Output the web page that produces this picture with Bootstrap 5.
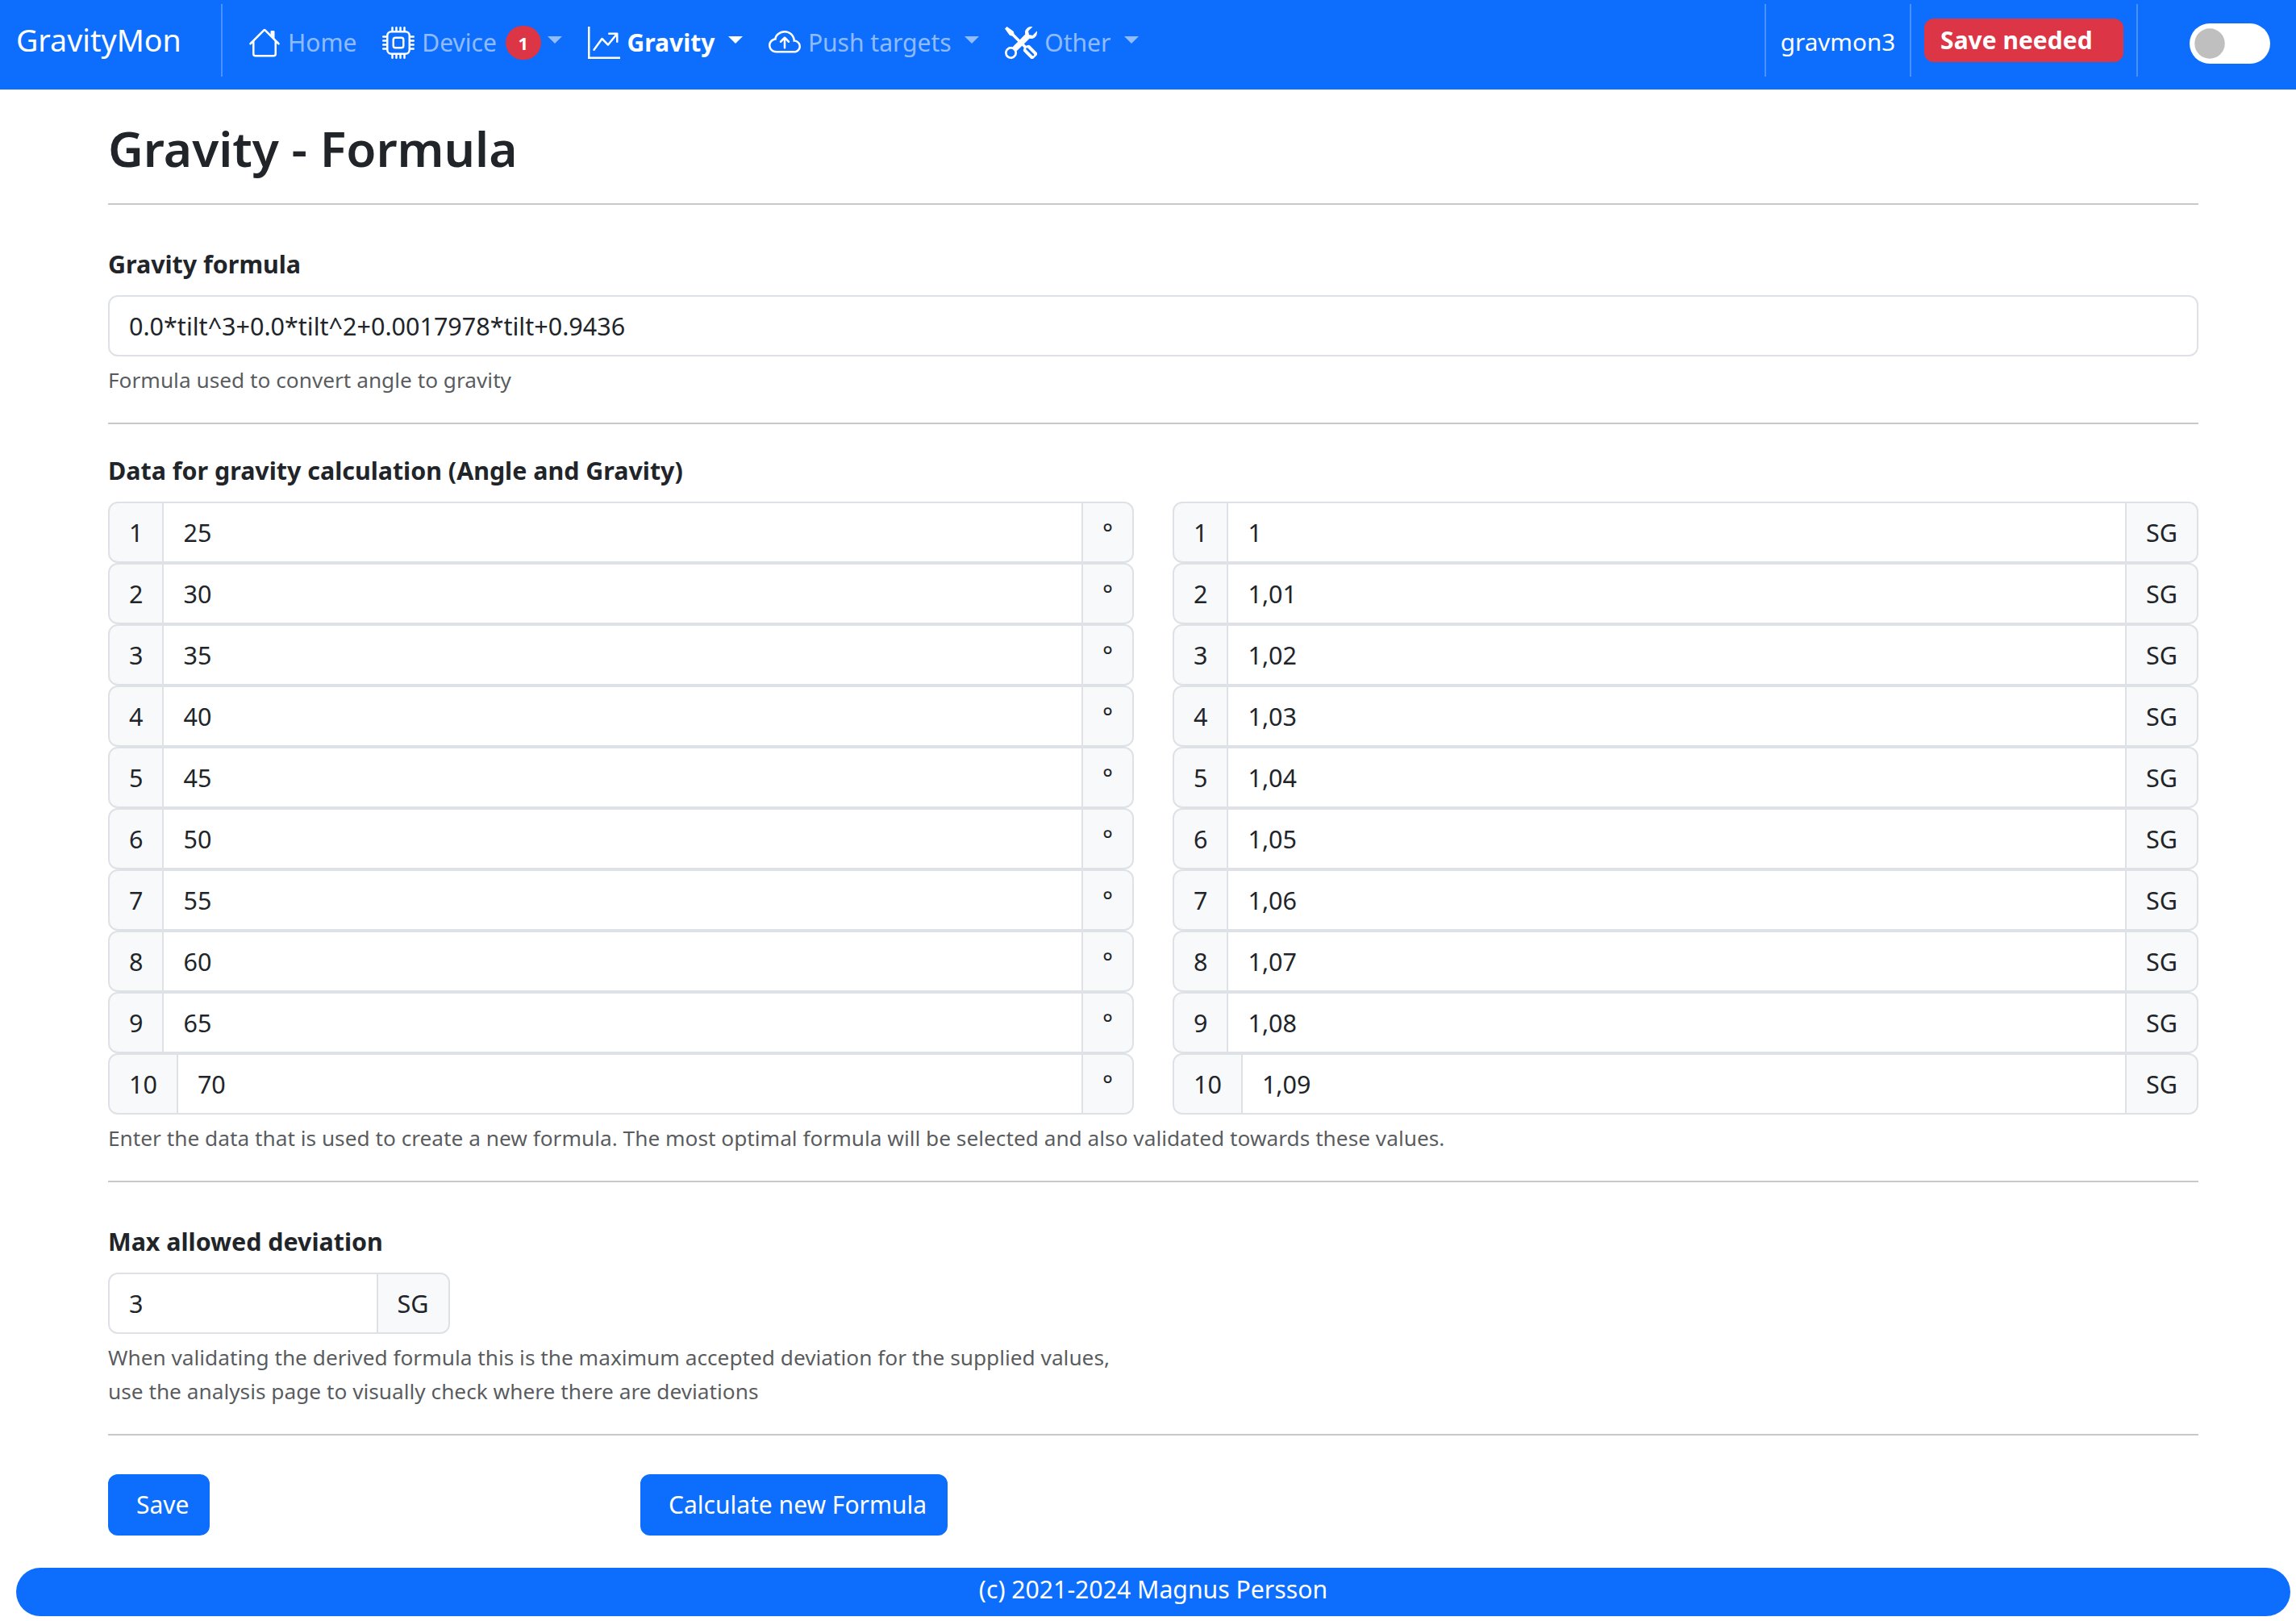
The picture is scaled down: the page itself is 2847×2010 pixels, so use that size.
<!doctype html>
<html lang="en">
<head>
<meta charset="utf-8">
<title>GravityMon</title>
<link href="https://cdn.jsdelivr.net/npm/bootstrap@5.3.0/dist/css/bootstrap.min.css" rel="stylesheet">
<style>
html{zoom:2;overflow-x:hidden}
body{width:1430px;font-family:"Noto Sans","Open Sans",sans-serif;font-size:15px;line-height:24px;color:#212529}
.form-control,.input-group-text{font-size:15.25px;line-height:24px}
.btn,.nav-link{font-size:15px;line-height:24px}
.gm-nav{height:55.5px;padding:0 0 5.5px 0;align-items:stretch}
.gm-nav .navbar-brand{font-size:18.8px;margin:0 0 0 10px;padding:0;display:flex;align-items:center;width:127px}
.gm-nav .vr{align-self:center;height:45px;color:#fff;opacity:.25}
.gm-nav .navbar-nav{align-items:center;margin-left:8px;gap:0}
.gm-nav .nav-link{padding:10px 8px 7px;white-space:nowrap;display:flex;align-items:center;gap:4.5px}
.gm-nav .nav-link.active{font-weight:700}
.gm-nav .dropdown-toggle::after{margin-bottom:4px}
.gm-nav svg{width:20px;height:20px;flex:none;color:#fff}
.gm-badge{font-size:11px;width:22px;height:21px;padding:0;margin:0 -4.5px 0 1px;display:inline-flex;align-items:center;justify-content:center}
.gm-host{color:#fff;font-size:14.8px;padding:2px 9px 0;align-self:center}
.gm-save{font-weight:700;height:27px;padding:0 19.2px 0 10px;margin:0 8px;align-self:center;display:flex;align-items:center;border:0}
.gm-switch{margin:4px 22.5px 0 32px;min-height:0;padding:0;align-self:center;display:flex}
.gm-switch .form-check-input{width:50px;height:25px;margin:0;border:0;background-color:#fff;float:none}
h1.gm-title{font-size:30.2px;font-weight:600;line-height:1.2;margin:18.5px 0 15.7px}
.gm-label{font-weight:700;font-size:15.2px;padding-top:1px;margin-bottom:7px;display:block}
.gm-help{color:rgba(33,37,41,.75);font-size:13.13px;line-height:21px;margin-top:4px}
.gm-small-group{width:33.3%}
.gm-action{padding-left:16.5px;padding-right:12px}
.gm-foot{margin:20px 10px 0;height:30px;line-height:27px;font-size:15.1px;text-align:center}
.gm-title-rule{margin:0 0 24.1px}
</style>
</head>
<body>
<nav class="navbar navbar-expand-lg navbar-dark bg-primary gm-nav flex-nowrap">
  <a class="navbar-brand" href="#">GravityMon</a>
  <div class="vr"></div>
  <ul class="navbar-nav flex-row">
    <li class="nav-item"><a class="nav-link" href="#"><svg viewBox="0 0 16 16" fill="currentColor"><path fill-rule="evenodd" d="M2 13.5V7h1v6.5a.5.5 0 0 0 .5.5h9a.5.5 0 0 0 .5-.5V7h1v6.5a1.5 1.5 0 0 1-1.5 1.5h-9A1.5 1.5 0 0 1 2 13.5zm11-11V6l-2-2V2.5a.5.5 0 0 1 .5-.5h1a.5.5 0 0 1 .5.5z"/><path fill-rule="evenodd" d="M7.293 1.5a1 1 0 0 1 1.414 0l6.647 6.646a.5.5 0 0 1-.708.708L8 2.207 1.354 8.854a.5.5 0 1 1-.708-.708L7.293 1.5z"/></svg>Home</a></li>
    <li class="nav-item dropdown"><a class="nav-link dropdown-toggle" href="#"><svg viewBox="0 0 16 16" fill="currentColor"><path d="M5 0a.5.5 0 0 1 .5.5V2h1V.5a.5.5 0 0 1 1 0V2h1V.5a.5.5 0 0 1 1 0V2h1V.5a.5.5 0 0 1 1 0V2A2.5 2.5 0 0 1 14 4.5h1.5a.5.5 0 0 1 0 1H14v1h1.5a.5.5 0 0 1 0 1H14v1h1.5a.5.5 0 0 1 0 1H14v1h1.5a.5.5 0 0 1 0 1H14a2.5 2.5 0 0 1-2.5 2.5v1.5a.5.5 0 0 1-1 0V14h-1v1.5a.5.5 0 0 1-1 0V14h-1v1.5a.5.5 0 0 1-1 0V14h-1v1.5a.5.5 0 0 1-1 0V14A2.5 2.5 0 0 1 2 11.5H.5a.5.5 0 0 1 0-1H2v-1H.5a.5.5 0 0 1 0-1H2v-1H.5a.5.5 0 0 1 0-1H2v-1H.5a.5.5 0 0 1 0-1H2A2.5 2.5 0 0 1 4.5 2V.5A.5.5 0 0 1 5 0zm-.5 3A1.5 1.5 0 0 0 3 4.5v7A1.5 1.5 0 0 0 4.5 13h7a1.5 1.5 0 0 0 1.5-1.5v-7A1.5 1.5 0 0 0 11.5 3h-7zM5 6.5A1.5 1.5 0 0 1 6.5 5h3A1.5 1.5 0 0 1 11 6.5v3A1.5 1.5 0 0 1 9.5 11h-3A1.5 1.5 0 0 1 5 9.5v-3zM6.5 6a.5.5 0 0 0-.5.5v3a.5.5 0 0 0 .5.5h3a.5.5 0 0 0 .5-.5v-3a.5.5 0 0 0-.5-.5h-3z"/></svg>Device <span class="badge rounded-pill text-bg-danger gm-badge">1</span></a></li>
    <li class="nav-item dropdown"><a class="nav-link dropdown-toggle active" href="#"><svg viewBox="0 0 16 16" fill="currentColor"><path fill-rule="evenodd" d="M0 0h1v15h15v1H0V0Zm10 3.5a.5.5 0 0 1 .5-.5h4a.5.5 0 0 1 .5.5v4a.5.5 0 0 1-1 0V4.9l-3.613 4.417a.5.5 0 0 1-.74.037L7.06 6.767l-3.656 5.027a.5.5 0 0 1-.808-.588l4-5.5a.5.5 0 0 1 .758-.06l2.609 2.61L13.445 4H10.5a.5.5 0 0 1-.5-.5Z"/></svg>Gravity</a></li>
    <li class="nav-item dropdown"><a class="nav-link dropdown-toggle" href="#"><svg viewBox="0 0 16 16" fill="currentColor"><path fill-rule="evenodd" d="M7.646 5.146a.5.5 0 0 1 .708 0l2 2a.5.5 0 0 1-.708.708L8.5 6.707V10.5a.5.5 0 0 1-1 0V6.707L6.354 7.854a.5.5 0 1 1-.708-.708l2-2z"/><path d="M4.406 3.342A5.53 5.53 0 0 1 8 2c2.69 0 4.923 2 5.166 4.579C14.758 6.804 16 8.137 16 9.773 16 11.569 14.502 13 12.687 13H3.781C1.708 13 0 11.366 0 9.318c0-1.763 1.266-3.223 2.942-3.593.143-.863.698-1.723 1.464-2.383zm.653.757c-.757.653-1.153 1.44-1.153 2.056v.448l-.445.049C2.064 6.805 1 7.952 1 9.318 1 10.785 2.23 12 3.781 12h8.906C13.98 12 15 10.988 15 9.773c0-1.216-1.02-2.228-2.313-2.228h-.5v-.5C12.188 4.825 10.328 3 8 3a4.53 4.53 0 0 0-2.941 1.1z"/></svg>Push targets</a></li>
    <li class="nav-item dropdown"><a class="nav-link dropdown-toggle" href="#"><svg viewBox="0 0 16 16" fill="currentColor"><path d="M1 0 0 1l2.2 3.081a1 1 0 0 0 .815.419h.07a1 1 0 0 1 .708.293l2.675 2.675-2.617 2.654A3.003 3.003 0 0 0 0 13a3 3 0 1 0 5.878-.851l2.654-2.617.968.968-.305.914a1 1 0 0 0 .242 1.023l3.356 3.356a1 1 0 0 0 1.414 0l1.586-1.586a1 1 0 0 0 0-1.414l-3.356-3.356a1 1 0 0 0-1.023-.242L10.5 9.5l-.96-.96 2.68-2.643A3.005 3.005 0 0 0 16 3c0-.269-.035-.53-.102-.777l-2.14 2.141L12 4l-.364-1.757L13.777.102a3 3 0 0 0-3.675 3.68L7.462 6.46 4.793 3.793a1 1 0 0 1-.293-.707v-.071a1 1 0 0 0-.419-.814L1 0zm9.646 10.646a.5.5 0 0 1 .708 0l3 3a.5.5 0 0 1-.708.708l-3-3a.5.5 0 0 1 0-.708zM3 11l.471.242.529.026.287.445.445.287.026.529L5 13l-.242.471-.026.529-.445.287-.287.445-.529.026L3 15l-.471-.242L2 14.732l-.287-.445L1.268 14l-.026-.529L1 13l.242-.471.026-.529.445-.287.287-.445.529-.026L3 11z"/></svg>Other</a></li>
  </ul>
  <div class="vr ms-auto"></div>
  <span class="gm-host">gravmon3</span>
  <div class="vr"></div>
  <button class="btn btn-danger gm-save" type="button">Save needed</button>
  <div class="vr"></div>
  <div class="form-check form-switch gm-switch"><input class="form-check-input" type="checkbox" role="switch" aria-label="Dark mode"></div>
</nav>

<main class="container">
  <h1 class="gm-title">Gravity - Formula</h1>
  <hr class="gm-title-rule">
  <form>
    <label class="gm-label" for="formula">Gravity formula</label>
    <input class="form-control" id="formula" type="text" value="0.0*tilt^3+0.0*tilt^2+0.0017978*tilt+0.9436">
    <div class="gm-help">Formula used to convert angle to gravity</div>
    <hr class="my-3">
    <label class="gm-label">Data for gravity calculation (Angle and Gravity)</label>
    <div class="row">
      <div class="col-md-6">
        <div class="input-group"><span class="input-group-text">1</span><input class="form-control" type="text" value="25"><span class="input-group-text">°</span></div>
        <div class="input-group"><span class="input-group-text">2</span><input class="form-control" type="text" value="30"><span class="input-group-text">°</span></div>
        <div class="input-group"><span class="input-group-text">3</span><input class="form-control" type="text" value="35"><span class="input-group-text">°</span></div>
        <div class="input-group"><span class="input-group-text">4</span><input class="form-control" type="text" value="40"><span class="input-group-text">°</span></div>
        <div class="input-group"><span class="input-group-text">5</span><input class="form-control" type="text" value="45"><span class="input-group-text">°</span></div>
        <div class="input-group"><span class="input-group-text">6</span><input class="form-control" type="text" value="50"><span class="input-group-text">°</span></div>
        <div class="input-group"><span class="input-group-text">7</span><input class="form-control" type="text" value="55"><span class="input-group-text">°</span></div>
        <div class="input-group"><span class="input-group-text">8</span><input class="form-control" type="text" value="60"><span class="input-group-text">°</span></div>
        <div class="input-group"><span class="input-group-text">9</span><input class="form-control" type="text" value="65"><span class="input-group-text">°</span></div>
        <div class="input-group"><span class="input-group-text">10</span><input class="form-control" type="text" value="70"><span class="input-group-text">°</span></div>
      </div>
      <div class="col-md-6">
        <div class="input-group"><span class="input-group-text">1</span><input class="form-control" type="text" value="1"><span class="input-group-text">SG</span></div>
        <div class="input-group"><span class="input-group-text">2</span><input class="form-control" type="text" value="1,01"><span class="input-group-text">SG</span></div>
        <div class="input-group"><span class="input-group-text">3</span><input class="form-control" type="text" value="1,02"><span class="input-group-text">SG</span></div>
        <div class="input-group"><span class="input-group-text">4</span><input class="form-control" type="text" value="1,03"><span class="input-group-text">SG</span></div>
        <div class="input-group"><span class="input-group-text">5</span><input class="form-control" type="text" value="1,04"><span class="input-group-text">SG</span></div>
        <div class="input-group"><span class="input-group-text">6</span><input class="form-control" type="text" value="1,05"><span class="input-group-text">SG</span></div>
        <div class="input-group"><span class="input-group-text">7</span><input class="form-control" type="text" value="1,06"><span class="input-group-text">SG</span></div>
        <div class="input-group"><span class="input-group-text">8</span><input class="form-control" type="text" value="1,07"><span class="input-group-text">SG</span></div>
        <div class="input-group"><span class="input-group-text">9</span><input class="form-control" type="text" value="1,08"><span class="input-group-text">SG</span></div>
        <div class="input-group"><span class="input-group-text">10</span><input class="form-control" type="text" value="1,09"><span class="input-group-text">SG</span></div>
      </div>
    </div>
    <div class="gm-help">Enter the data that is used to create a new formula. The most optimal formula will be selected and also validated towards these values.</div>
    <hr class="mt-3 mb-4">
    <div class="row">
      <div class="col-md-6">
        <label class="gm-label">Max allowed deviation</label>
        <div class="input-group gm-small-group"><input class="form-control" type="text" value="3"><span class="input-group-text">SG</span></div>
        <div class="gm-help">When validating the derived formula this is the maximum accepted deviation for the supplied values,<br>use the analysis page to visually check where there are deviations</div>
      </div>
    </div>
    <hr class="mt-3 mb-4">
    <div class="row">
      <div class="col-md-3"><button class="btn btn-primary gm-action" type="button">Save</button></div>
      <div class="col-md-3"><button class="btn btn-primary gm-action" type="button">Calculate new Formula</button></div>
    </div>
  </form>
</main>
<footer class="text-bg-primary rounded-pill gm-foot">(c) 2021-2024 Magnus Persson</footer>
<script src="https://cdn.jsdelivr.net/npm/bootstrap@5.3.0/dist/js/bootstrap.bundle.min.js"></script>
</body>
</html>
